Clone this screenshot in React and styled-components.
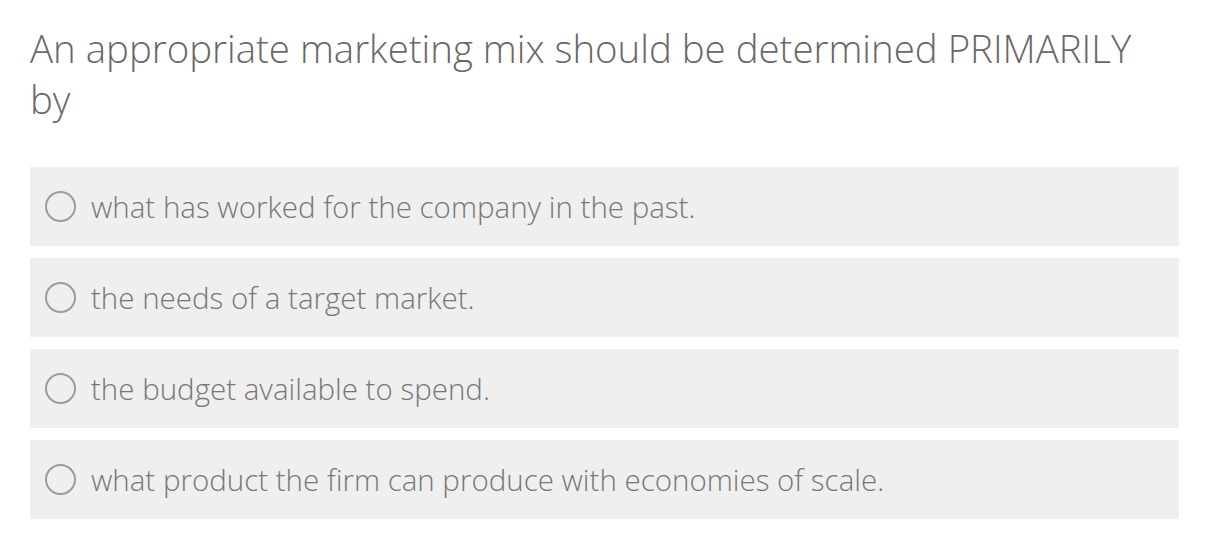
import { createGlobalStyle, styled } from "styled-components";

const GlobalStyle = createGlobalStyle`
	body {
		margin: 0;
		background: #fff;
		font-family: "Open Sans", sans-serif;
	}
`;

const answers = [
	"what has worked for the company in the past.",
	"the needs of a target market.",
	"the budget available to spend.",
	"what product the firm can produce with economies of scale.",
];

export default function App() {
	return (
		<>
			<GlobalStyle />
			<ScPage>
				<ScQuestion>
					An appropriate marketing mix should be determined PRIMARILY by
				</ScQuestion>
				<ScOptions>
					{answers.map((answer) => {
						return (
							<ScOption key={answer}>
								<ScRadio />
								<span>{answer}</span>
							</ScOption>
						);
					})}
				</ScOptions>
			</ScPage>
		</>
	);
}

const ScPage = styled.div`
	width: 1149px;
	padding: 23px 0 0 30px;
	display: flex;
	flex-direction: column;
	gap: 42px;
`;

const ScQuestion = styled.p`
	margin: 0;
	width: 1105px;
	font-family: "Open Sans", sans-serif;
	font-size: 38.4px;
	font-weight: 300;
	line-height: 51px;
	color: #686868;
`;

const ScOptions = styled.div`
	display: flex;
	flex-direction: column;
	gap: 12px;
`;

const ScOption = styled.label`
	height: 79px;
	padding-left: 15px;
	display: flex;
	align-items: center;
	gap: 15px;
	background-color: #efefef;
	font-family: "Open Sans", sans-serif;
	font-size: 29.5px;
	font-weight: 300;
	color: #777;
`;

const ScRadio = styled.span`
	width: 27px;
	height: 27px;
	border: 2.5px solid #9c9c9c;
	border-radius: 50%;
	flex-shrink: 0;
`;
